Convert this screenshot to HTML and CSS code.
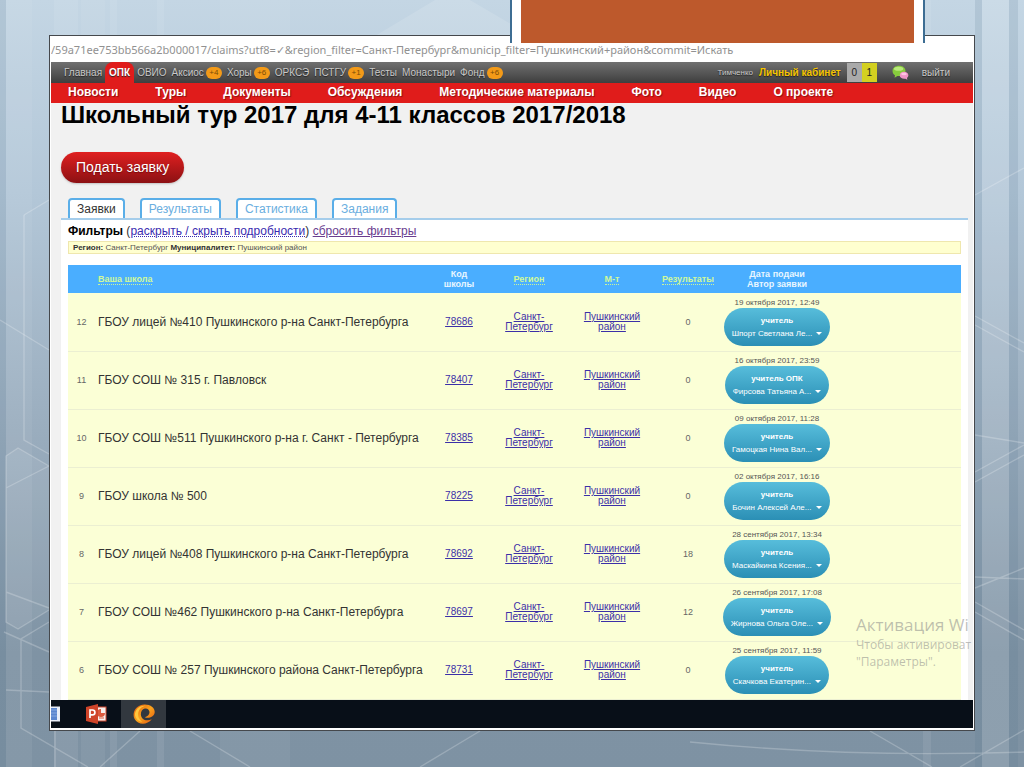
FILE: index.html
```html
<!DOCTYPE html>
<html lang="ru">
<head>
<meta charset="utf-8">
<title>Школьный тур 2017</title>
<link rel="stylesheet" href="styles.css">
</head>
<body>
<svg class="backdrop" viewBox="0 0 1024 767" preserveAspectRatio="none" aria-hidden="true">
  <g fill="#56748c" fill-opacity=".16">
    <rect x="0" width="6" height="767"/><rect x="6" width="26" height="767" fill="#fff" fill-opacity=".06"/>
    <rect x="975" width="7" height="767"/><rect x="1009" width="9" height="767"/>
  </g>
  <g fill="#fff" fill-opacity=".08">
    <rect x="982" width="27" height="767" fill-opacity=".12"/><rect x="54" width="24" height="767"/><rect x="110" width="7" height="767"/><rect x="157" width="7" height="767"/>
    <rect x="81" width="24" height="767" fill-opacity=".06"/><rect x="220" width="70" height="767" fill-opacity=".05"/><rect x="923" width="8" height="767"/>
    <path d="M6 456 18 448 49 466V610L18 629 6 622Z"/>
    <path d="M375 36 435 0H470L511 24V36Z" fill-opacity=".12"/>
  </g>
  <g fill="none" stroke="#fff" stroke-opacity=".22" stroke-width="1.400">
    <path d="M24 215V440L49 454M49 466 18 448 6 456V622L18 629 49 610M6 488 49 466M6 592 49 608M4 632 49 652M6 690 49 692M49 622 21 639V728L88 767M55 731V767"/>
    <path d="M24 215 49 200M0 320 49 350M100 767 140 731M190 731 250 767M420 767 480 731M690 742Q850 758 1024 752M870 731 932 767M960 767 1024 730"/>
    <path d="M975 195 1024 168M975 316 1024 343M975 325 1024 352M975 435 1024 443M975 472 1024 445M975 482 1024 455M975 577 1024 579M975 588 1024 568M975 602 1024 630M975 612 1024 640"/>
  </g>
</svg>

<div class="window">
  <div class="address">/59a71ee753bb566a2b000017/claims?utf8=✓&amp;region_filter=Санкт-Петербург&amp;municip_filter=Пушкинский+район&amp;commit=Искать</div>

  <header class="topbar">
    <nav class="sites">
      <a href="#">Главная</a>
      <a href="#" class="current">ОПК</a>
      <a href="#">ОВИО</a>
      <a href="#">Аксиос <span class="badge">+4</span></a>
      <a href="#">Хоры <span class="badge">+6</span></a>
      <a href="#">ОРКСЭ</a>
      <a href="#">ПСТГУ <span class="badge">+1</span></a>
      <a href="#">Тесты</a>
      <a href="#">Монастыри</a>
      <a href="#">Фонд <span class="badge">+6</span></a>
    </nav>
    <div class="account">
      <span class="user">Тимченко</span>
      <a href="#" class="cabinet">Личный кабинет</a>
      <span class="counters"><span>0</span><span class="new">1</span></span>
      <svg class="chat" viewBox="0 0 18 16" aria-hidden="true">
        <path d="M7.500.8C3.400.8.500 3.200.500 6.300c0 2 1 3.500 2.600 4.500l-.4 2.800 3-2c5 .6 8.600-1.900 8.600-5.300 0-3.100-2.800-5.500-6.800-5.500Z" fill="#87cc3d"/>
        <ellipse cx="7" cy="4" rx="5" ry="2.200" fill="#b9e97b"/>
        <path d="M12.500 7.300c2.900 0 4.900 1.500 4.900 3.700 0 1.200-.6 2.100-1.500 2.800l.4 1.900-2-1.100c-3.500.5-6.100-1.200-6.100-3.600 0-2.200 1.900-3.700 4.300-3.700Z" fill="#f095c7"/>
        <ellipse cx="12.700" cy="9.500" rx="3" ry="1.300" fill="#ffc4e3"/>
      </svg>
      <a href="#" class="logout">выйти</a>
    </div>
  </header>

  <nav class="menu">
    <a href="#">Новости</a>
    <a href="#">Туры</a>
    <a href="#">Документы</a>
    <a href="#">Обсуждения</a>
    <a href="#">Методические материалы</a>
    <a href="#">Фото</a>
    <a href="#">Видео</a>
    <a href="#">О проекте</a>
  </nav>

  <main class="page">
    <h1>Школьный тур 2017 для 4-11 классов 2017/2018</h1>
    <button type="button" class="apply">Подать заявку</button>

    <nav class="tabs">
      <a href="#" class="active">Заявки</a>
      <a href="#">Результаты</a>
      <a href="#">Статистика</a>
      <a href="#">Задания</a>
    </nav>

    <section class="panel">
      <p class="filters"><b>Фильтры</b> (<a href="#" class="toggle">раскрыть / скрыть подробности</a>) <a href="#" class="reset">сбросить фильтры</a></p>
      <p class="summary"><b>Регион:</b> Санкт-Петербург <b>Муниципалитет:</b> Пушкинский район</p>

      <table class="claims">
        <colgroup><col class="c-num"><col class="c-name"><col class="c-code"><col class="c-region"><col class="c-mun"><col class="c-result"><col class="c-date"><col class="c-rest"></colgroup>
        <thead>
          <tr>
            <th></th>
            <th class="name"><a href="#">Ваша школа</a></th>
            <th>Код<br>школы</th>
            <th><a href="#">Регион</a></th>
            <th><a href="#">М-т</a></th>
            <th><a href="#">Результаты</a></th>
            <th>Дата подачи<br>Автор заявки</th>
            <th></th>
          </tr>
        </thead>
        <tbody>
          <tr>
            <td class="num">12</td><td class="name">ГБОУ лицей №410 Пушкинского р-на Санкт-Петербурга</td>
            <td><a href="#">78686</a></td><td><a href="#">Санкт-Петербург</a></td><td><a href="#">Пушкинский район</a></td><td class="result">0</td>
            <td class="author"><time>19 октября 2017, 12:49</time><button type="button"><b>учитель</b><span>Шпорт Светлана Ле... <i></i></span></button></td><td></td>
          </tr>
          <tr>
            <td class="num">11</td><td class="name">ГБОУ СОШ № 315 г. Павловск</td>
            <td><a href="#">78407</a></td><td><a href="#">Санкт-Петербург</a></td><td><a href="#">Пушкинский район</a></td><td class="result">0</td>
            <td class="author"><time>16 октября 2017, 23:59</time><button type="button"><b>учитель ОПК</b><span>Фирсова Татьяна А... <i></i></span></button></td><td></td>
          </tr>
          <tr>
            <td class="num">10</td><td class="name">ГБОУ СОШ №511 Пушкинского р-на г. Санкт - Петербурга</td>
            <td><a href="#">78385</a></td><td><a href="#">Санкт-Петербург</a></td><td><a href="#">Пушкинский район</a></td><td class="result">0</td>
            <td class="author"><time>09 октября 2017, 11:28</time><button type="button"><b>учитель</b><span>Гамоцкая Нина Вал... <i></i></span></button></td><td></td>
          </tr>
          <tr>
            <td class="num">9</td><td class="name">ГБОУ школа № 500</td>
            <td><a href="#">78225</a></td><td><a href="#">Санкт-Петербург</a></td><td><a href="#">Пушкинский район</a></td><td class="result">0</td>
            <td class="author"><time>02 октября 2017, 16:16</time><button type="button"><b>учитель</b><span>Бочин Алексей Але... <i></i></span></button></td><td></td>
          </tr>
          <tr>
            <td class="num">8</td><td class="name">ГБОУ лицей №408 Пушкинского р-на Санкт-Петербурга</td>
            <td><a href="#">78692</a></td><td><a href="#">Санкт-Петербург</a></td><td><a href="#">Пушкинский район</a></td><td class="result">18</td>
            <td class="author"><time>28 сентября 2017, 13:34</time><button type="button"><b>учитель</b><span>Маскайкина Ксения... <i></i></span></button></td><td></td>
          </tr>
          <tr>
            <td class="num">7</td><td class="name">ГБОУ СОШ №462 Пушкинского р-на Санкт-Петербурга</td>
            <td><a href="#">78697</a></td><td><a href="#">Санкт-Петербург</a></td><td><a href="#">Пушкинский район</a></td><td class="result">12</td>
            <td class="author"><time>26 сентября 2017, 17:08</time><button type="button"><b>учитель</b><span>Жирнова Ольга Оле... <i></i></span></button></td><td></td>
          </tr>
          <tr>
            <td class="num">6</td><td class="name">ГБОУ СОШ № 257 Пушкинского района Санкт-Петербурга</td>
            <td><a href="#">78731</a></td><td><a href="#">Санкт-Петербург</a></td><td><a href="#">Пушкинский район</a></td><td class="result">0</td>
            <td class="author"><time>25 сентября 2017, 11:59</time><button type="button"><b>учитель</b><span>Скачкова Екатерин... <i></i></span></button></td><td></td>
          </tr>
        </tbody>
      </table>
    </section>
  </main>

  <footer class="taskbar">
    <svg class="task-doc" viewBox="0 0 9 16" aria-hidden="true"><rect width="9" height="15" y=".5" fill="#e9eef8"/><rect width="6" height="12" y="2" fill="#5b86cf"/><path d="M0 4h6M0 7h6M0 10h6" stroke="#86a7df"/></svg>
    <svg class="task-ppt" viewBox="0 0 21 20" aria-hidden="true"><rect x="9" y="3" width="11" height="14" fill="#f7efec" stroke="#cf4930"/><path d="M15 5v4h4a4 4 0 1 1-4-4Z" fill="#dd5a3d"/><path d="M13 14h5" stroke="#dd5a3d"/><path d="M0 3 12 0v20L0 17Z" fill="#cf4429"/><path d="M4 14V6h2.500a2.300 2.300 0 0 1 0 4.800H4" fill="none" stroke="#fff" stroke-width="1.700"/></svg>
    <span class="task-active">
      <svg viewBox="0 0 22 20" aria-hidden="true"><defs><linearGradient id="flame" x2="1" y2="1"><stop stop-color="#e3590e"/><stop offset=".5" stop-color="#f9a31d"/><stop offset="1" stop-color="#e2520f"/></linearGradient></defs>
        <path d="M18.800 15.300C14 21.500 4.800 21 1.600 15-1.600 8.700 3 .7 11.500.4 18 .2 22.500 4.500 21.600 9c-.8 4-5.800 5.800-9.800 4.300 2.600-.6 4.800-2.500 4.700-5.200-.1-2.600-2.400-4.100-4.700-3.500-3.600.9-4.900 5.500-3.200 8.600 2 3.500 6.500 3.900 10.200 2.100Z" fill="url(#flame)"/>
        <path d="M2 9.500C3 4 7.500 1.300 12.500 1.700 8 2.800 5 6 5.200 11c.1 3 1.800 5.500 4 6.800C4.500 17 1.500 13.500 2 9.500Z" fill="#ffc63d"/></svg>
    </span>
  </footer>

  <div class="watermark"><strong>Активация Wi</strong><span>Чтобы активироват</span><span>"Параметры".</span></div>
</div>
<div class="banner"><div class="banner-fill"></div></div>
</body>
</html>
```
FILE: styles.css
```css
* { box-sizing: border-box; }

body {
  position: relative;
  display: flex;
  flex-direction: column;
  min-height: 100vh;
  margin: 0;
  padding: 35px 49px 36px;
  background: linear-gradient(#c4d6e4 0%, #b3c7d8 25%, #9baebf 55%, #7f93a4 85%, #7e92a3 100%);
  font-family: "Liberation Sans", Arial, sans-serif;
}

p, h1 { margin: 0; }
a { color: inherit; text-decoration: none; }
button { border: 0; font-family: inherit; }

.backdrop { position: absolute; top: 0; left: 0; width: 100%; height: 100%; }

.banner {
  position: absolute;
  top: 0;
  right: 99px;
  width: 415px;
  padding: 0 9px;
  border: solid #3d6d93;
  border-width: 0 2px;
  background: #fff;
}
.banner-fill { height: 43px; background: #bd592c; }

.window {
  position: relative;
  flex: 1;
  display: flex;
  flex-direction: column;
  overflow: hidden;
  padding: 0 1px 2px;
  border: 1px solid #45484c;
  background: #fff;
}

.address {
  height: 26px;
  overflow: hidden;
  color: #919191;
  font: 11px/28px "Noto Sans", "Open Sans", sans-serif;
  white-space: nowrap;
}

.topbar {
  display: flex;
  justify-content: space-between;
  height: 21px;
  padding: 0 23px 0 13px;
  background: linear-gradient(#707070, #3e3e3e);
  color: #c9c9c9;
  font-size: 10px;
  line-height: 21px;
  text-shadow: 0 1px 1px #222;
  white-space: nowrap;
}
.sites { display: flex; gap: 5px; }
.sites a { display: flex; align-items: center; gap: 2px; }
.sites .current {
  margin: 0 -2px;
  padding: 0 4px;
  border-radius: 8px 8px 0 0;
  background: #e01c1b;
  color: #fff;
  font-weight: bold;
}
.badge {
  width: 16px;
  border-radius: 6px;
  background: #f39a18;
  color: #7a4c06;
  font-size: 8px;
  line-height: 12px;
  text-align: center;
  text-shadow: none;
}
.account { display: flex; align-items: center; }
.user { margin-right: 6px; font-size: 8px; }
.cabinet { margin-right: 6px; color: #f5c400; font-weight: bold; }
.counters { display: flex; margin-right: 15px; color: #222; text-shadow: none; }
.counters span { width: 15px; background: #aaa; line-height: 19px; text-align: center; }
.counters .new { background: #d3d021; }
.chat { width: 17px; height: 15px; margin-right: 13px; }

.menu {
  display: flex;
  gap: 37px;
  height: 20px;
  padding: 0 17px;
  background: #e01c1b;
  color: #fff;
  font-size: 12px;
  font-weight: bold;
  line-height: 19px;
  text-shadow: 1px 1px 1px #8d1010;
  white-space: nowrap;
}

.page { flex: 1; padding: 0 5px 0 10px; background: #f1f1f1; }
.page h1 { color: #000; font-size: 24px; line-height: 24px; }

.apply {
  display: block;
  margin-top: 25px;
  padding: 0 15px;
  border-radius: 16px;
  background: linear-gradient(#e02020, #8c1013);
  box-shadow: 0 1px 2px #9998;
  color: #fff;
  font-size: 14px;
  line-height: 31px;
  text-shadow: 0 1px 1px #5008;
}

.tabs {
  display: flex;
  gap: 15px;
  margin-top: 15px;
  padding-left: 7px;
  border-bottom: 2px solid #a5cdeb;
  color: #6aaee0;
  font-size: 12px;
  line-height: 18px;
}
.tabs a { padding: 0 7px; border: solid #5aaee8; border-width: 2px 2px 0; border-radius: 4px 4px 0 0; background: #fff; }
.tabs .active { color: #333; }

.panel { padding: 0 7px; background: #fff; }
.filters { padding-top: 1px; color: #333; font-size: 12px; line-height: 20px; }
.filters b { color: #000; }
.toggle { color: #3a2bb0; text-decoration: underline dotted; }
.reset { color: #6a3d8f; text-decoration: underline; }
.summary {
  padding: 0 4px;
  border: 1px solid #efe7ae;
  background: #ffffcf;
  color: #555;
  font-size: 8px;
  line-height: 11px;
}
.summary b { color: #333; }

.claims {
  width: 100%;
  margin-top: 11px;
  border-collapse: collapse;
  table-layout: fixed;
  background: #fbffd6;
  color: #444;
  font-size: 10px;
  line-height: 10px;
  text-align: center;
}
.c-num { width: 27px; }
.c-code, .c-region { width: 70px; }
.c-mun { width: 96px; }
.c-result { width: 56px; }
.c-date { width: 122px; }
.c-rest { width: 123px; }

.claims th { height: 28px; padding: 0; background: #4aaeff; color: #e8f6ff; font-size: 9px; }
.claims th a { border-bottom: 1px dotted #c8f59a; color: #d0f99a; }
.claims td { height: 58px; padding: 0 8px; border-bottom: 1px solid #ebefd2; }
.claims .name { padding: 0 0 0 3px; text-align: left; }
.claims td.name { color: #333; font-size: 12px; }
.claims td a { color: #3b2fa8; text-decoration: underline; }
.claims .num, .claims .result { padding: 0; color: #666; font-size: 9px; }
.claims td.author { padding: 0; }
.author time { display: block; color: #555; font-size: 8px; }
.author button {
  padding: 0 8px;
  height: 38px;
  border-radius: 19px;
  background: linear-gradient(#57bddb, #2b8fb5);
  color: #fff;
  font-size: 8px;
  line-height: 13px;
  white-space: nowrap;
}
.author b, .author span { display: block; }
.author i {
  display: inline-block;
  margin: 0 0 1px 2px;
  border: solid transparent;
  border-width: 3px 3px 0;
  border-top-color: #fff;
}

.taskbar { display: flex; align-items: center; height: 28px; background: #080f18; }
.task-doc { width: 9px; height: 16px; }
.task-ppt { width: 21px; height: 20px; margin: 0 14px 0 26px; }
.task-active { display: grid; place-items: center; width: 45px; height: 28px; background: #32383f; }
.task-active svg { width: 22px; height: 20px; }

.watermark {
  position: absolute;
  right: 0;
  bottom: 60px;
  width: 118px;
  color: #8888;
  font-family: "Open Sans", sans-serif;
  font-size: 12px;
  line-height: 17px;
  white-space: nowrap;
}
.watermark strong, .watermark span { display: block; }
.watermark strong { font-size: 17px; font-weight: normal; line-height: 22px; }
```
